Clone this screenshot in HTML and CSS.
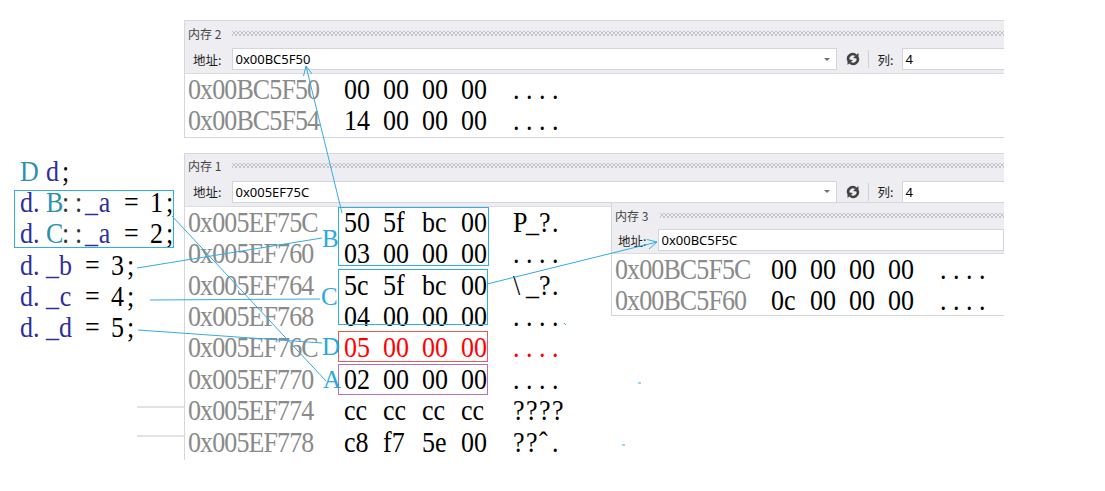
FILE: index.html
```html
<!DOCTYPE html>
<html lang="zh-CN">
<head>
<meta charset="utf-8">
<title>内存</title>
<link rel="stylesheet" href="styles.css">
</head>
<body>
<div class="canvas">
  <div class="code">
    <div class="line"><span class="ty">D</span><span>&nbsp;</span><span class="mb">d</span><span>;</span></div>
    <div class="line"><span class="mb">d</span><span class="mb dot">.</span><span class="ty">B</span><span class="op">:</span><span class="op">:</span><span class="mb">_</span><span class="mb">a</span><span>&nbsp;</span><span>=</span><span>&nbsp;</span><span>1</span><span>;</span></div>
    <div class="line"><span class="mb">d</span><span class="mb dot">.</span><span class="ty">C</span><span class="op">:</span><span class="op">:</span><span class="mb">_</span><span class="mb">a</span><span>&nbsp;</span><span>=</span><span>&nbsp;</span><span>2</span><span>;</span></div>
    <div class="line"><span class="mb">d</span><span class="mb dot">.</span><span class="mb">_</span><span class="mb">b</span><span>&nbsp;</span><span>=</span><span>&nbsp;</span><span>3</span><span>;</span></div>
    <div class="line"><span class="mb">d</span><span class="mb dot">.</span><span class="mb">_</span><span class="mb">c</span><span>&nbsp;</span><span>=</span><span>&nbsp;</span><span>4</span><span>;</span></div>
    <div class="line"><span class="mb">d</span><span class="mb dot">.</span><span class="mb">_</span><span class="mb">d</span><span>&nbsp;</span><span>=</span><span>&nbsp;</span><span>5</span><span>;</span></div>
  </div>

  <div class="stack">
    <section class="panel p2">
      <div class="head"><span>内存 2</span><div class="grip"></div></div>
      <div class="tools">
        <span class="lbl">地址:</span>
        <div class="field addr-field"><span>0x00BC5F50</span><i class="caret"></i></div>
        <svg class="refresh" viewBox="0 0 16 16" width="14" height="14"><path d="M2.8 9.6A5.3 5.3 0 0 1 11.4 3.9" fill="none" stroke="#424242" stroke-width="3"/><path d="M14.2 1.2L14.4 7.8L8 6.8Z" fill="#424242"/><path d="M13.2 6.4A5.3 5.3 0 0 1 4.6 12.1" fill="none" stroke="#424242" stroke-width="3"/><path d="M1.8 14.8L1.6 8.2L8 9.2Z" fill="#424242"/></svg>
        <i class="sep"></i>
        <span class="lbl col">列:</span>
        <div class="field cols"><span>4</span></div>
      </div>
      <div class="rows">
        <div class="row"><span class="addr">0x00BC5F50</span><span class="bytes"><span>00</span><span>00</span><span>00</span><span>00</span></span><span class="ascii"><span>.</span><span>.</span><span>.</span><span>.</span></span></div>
        <div class="row"><span class="addr">0x00BC5F54</span><span class="bytes"><span>14</span><span>00</span><span>00</span><span>00</span></span><span class="ascii"><span>.</span><span>.</span><span>.</span><span>.</span></span></div>
      </div>
    </section>

    <section class="panel p1">
      <div class="head"><span>内存 1</span><div class="grip"></div></div>
      <div class="tools">
        <span class="lbl">地址:</span>
        <div class="field addr-field"><span>0x005EF75C</span><i class="caret"></i></div>
        <svg class="refresh" viewBox="0 0 16 16" width="14" height="14"><path d="M2.8 9.6A5.3 5.3 0 0 1 11.4 3.9" fill="none" stroke="#424242" stroke-width="3"/><path d="M14.2 1.2L14.4 7.8L8 6.8Z" fill="#424242"/><path d="M13.2 6.4A5.3 5.3 0 0 1 4.6 12.1" fill="none" stroke="#424242" stroke-width="3"/><path d="M1.8 14.8L1.6 8.2L8 9.2Z" fill="#424242"/></svg>
        <i class="sep"></i>
        <span class="lbl col">列:</span>
        <div class="field cols"><span>4</span></div>
      </div>
      <div class="rows">
        <div class="row"><span class="addr">0x005EF75C</span><span class="bytes"><span>50</span><span>5f</span><span>bc</span><span>00</span></span><span class="ascii"><span>P</span><span>_</span><span>?</span><span>.</span></span></div>
        <div class="row"><span class="addr">0x005EF760</span><span class="bytes"><span>03</span><span>00</span><span>00</span><span>00</span></span><span class="ascii"><span>.</span><span>.</span><span>.</span><span>.</span></span></div>
        <div class="row"><span class="addr">0x005EF764</span><span class="bytes"><span>5c</span><span>5f</span><span>bc</span><span>00</span></span><span class="ascii"><span>\</span><span>_</span><span>?</span><span>.</span></span></div>
        <div class="row"><span class="addr">0x005EF768</span><span class="bytes"><span>04</span><span>00</span><span>00</span><span>00</span></span><span class="ascii"><span>.</span><span>.</span><span>.</span><span>.</span></span></div>
        <div class="row hot"><span class="addr">0x005EF76C</span><span class="bytes"><span>05</span><span>00</span><span>00</span><span>00</span></span><span class="ascii"><span>.</span><span>.</span><span>.</span><span>.</span></span></div>
        <div class="row"><span class="addr">0x005EF770</span><span class="bytes"><span>02</span><span>00</span><span>00</span><span>00</span></span><span class="ascii"><span>.</span><span>.</span><span>.</span><span>.</span></span></div>
        <div class="row"><span class="addr">0x005EF774</span><span class="bytes"><span>cc</span><span>cc</span><span>cc</span><span>cc</span></span><span class="ascii"><span>?</span><span>?</span><span>?</span><span>?</span></span></div>
        <div class="row"><span class="addr">0x005EF778</span><span class="bytes"><span>c8</span><span>f7</span><span>5e</span><span>00</span></span><span class="ascii"><span>?</span><span>?</span><span>ˆ</span><span>.</span></span></div>
      </div>
    </section>
  </div>

  <section class="panel p3">
    <div class="head"><span>内存 3</span><div class="grip"></div></div>
    <div class="tools">
      <span class="lbl">地址:</span>
      <div class="field wide"><span>0x00BC5F5C</span></div>
    </div>
    <div class="rows">
      <div class="row"><span class="addr">0x00BC5F5C</span><span class="bytes"><span>00</span><span>00</span><span>00</span><span>00</span></span><span class="ascii"><span>.</span><span>.</span><span>.</span><span>.</span></span></div>
      <div class="row"><span class="addr">0x00BC5F60</span><span class="bytes"><span>0c</span><span>00</span><span>00</span><span>00</span></span><span class="ascii"><span>.</span><span>.</span><span>.</span><span>.</span></span></div>
    </div>
  </section>

  <svg class="notes" width="1105" height="491" viewBox="0 0 1105 491">
    <g stroke="#e2e2ea" stroke-width="2">
      <line x1="137" y1="407" x2="184" y2="407"/>
      <line x1="137" y1="436" x2="184" y2="436"/>
    </g>
    <g fill="none" stroke="#33ace3" stroke-width="1">
      <rect x="14.5" y="190.5" width="159" height="57"/>
      <rect x="338.5" y="207.5" width="150" height="58"/>
      <rect x="338.5" y="269.5" width="149" height="55"/>
      <line x1="342" y1="213" x2="306" y2="66"/>
      <polyline points="303.5,76 306,66 312,74"/>
      <line x1="487" y1="284" x2="657" y2="242"/>
      <polyline points="647,239.5 657,242 649,249"/>
      <line x1="172" y1="216" x2="326" y2="381"/>
      <line x1="137" y1="268" x2="322" y2="238"/>
      <line x1="150" y1="300" x2="320" y2="299"/>
      <line x1="138" y1="330" x2="322" y2="343"/>
      <line x1="564" y1="323" x2="566" y2="325"/>
      <line x1="638" y1="383" x2="641" y2="383"/>
      <line x1="622" y1="445" x2="625" y2="445"/>
    </g>
    <rect x="338.5" y="331.5" width="149" height="30" fill="none" stroke="#e25c5c"/>
    <rect x="338.5" y="364.5" width="149" height="30" fill="none" stroke="#b46fc8"/>
    <g class="tag">
      <text x="322" y="247">B</text>
      <text x="321" y="305">C</text>
      <text x="322" y="355">D</text>
      <text x="323" y="388">A</text>
    </g>
  </svg>
</div>
</body>
</html>
```

FILE: styles.css
```css
* { box-sizing: border-box; margin: 0; padding: 0; }
html, body { background: #fff; }
body { width: 1105px; height: 491px; overflow: hidden; }

.canvas {
  position: relative;
  width: 1105px;
  height: 491px;
  display: flex;
}

/* source code column */
.code {
  width: 184px;
  flex: none;
  padding: 156px 0 0 20px;
  font: 26px/31.2px "Liberation Serif", serif;
  color: #000;
}
.line { display: flex; height: 31.2px; white-space: nowrap; }
.line span {
  flex: none;
  width: 13px;
  text-align: center;
  transform: scaleY(1.14);
}
.line .dot { text-align: left; }
.line .ty { color: #2b91af; }
.line .mb { color: #2e2e9e; }
.line .op { color: #333; }

/* windows */
.stack {
  width: 820px;
  flex: none;
  display: flex;
  flex-direction: column;
  gap: 15px;
  padding-top: 20px;
}
.panel {
  background: #fff;
  border: 1px solid #d6d6de;
  border-right: 0;
  overflow: hidden;
}
.p1 { height: 307px; border-bottom: 0; }
.p3 {
  position: absolute;
  left: 611px;
  top: 202px;
  width: 393px;
  height: 114px;
}

.head {
  height: 24px;
  background: #eeeef2;
  display: flex;
  align-items: center;
  padding-left: 3px;
  font: 12px "Noto Sans CJK SC", sans-serif;
  color: #444;
  white-space: nowrap;
}
.grip {
  flex: 1;
  height: 5px;
  margin-left: 11px;
  background-image:
    radial-gradient(circle, #c4c4cc 0.8px, transparent 1.1px),
    radial-gradient(circle, #c4c4cc 0.8px, transparent 1.1px);
  background-size: 4px 4px, 4px 4px;
  background-position: 0 0, 2px 2px;
}
.p3 .grip { margin-left: 12px; }

.tools {
  height: 29px;
  background: #eeeef2;
  border-bottom: 1px solid #dcdce2;
  display: flex;
  align-items: center;
  padding-left: 8px;
  white-space: nowrap;
}
.p3 .tools { height: 27px; padding-left: 6px; }
.lbl {
  font: 12.5px "Noto Sans CJK SC", sans-serif;
  color: #1e1e1e;
  flex: none;
}
.field {
  height: 22px;
  background: #fff;
  border: 1px solid #d4d4dc;
  display: flex;
  align-items: center;
  justify-content: space-between;
  padding: 0 6px 0 2px;
  font: 13px "Noto Sans", sans-serif;
  color: #000;
}
.addr-field { width: 605px; margin-left: 11px; flex: none; }
.wide { flex: 1; margin-left: 12px; }
.caret {
  width: 0;
  height: 0;
  border-left: 3px solid transparent;
  border-right: 3px solid transparent;
  border-top: 3px solid #717171;
}
.refresh { margin-left: 9px; flex: none; }
.sep {
  width: 1px;
  height: 18px;
  background: #d0d0d8;
  margin-left: 8px;
  flex: none;
}
.col { margin-left: 8px; }
.cols { flex: 1; margin-left: 9px; border-right: 0; }

/* memory rows */
.rows {
  padding-left: 3px;
  font: 26px/31.4px "Liberation Serif", serif;
  color: #000;
}
.row { display: flex; height: 31.4px; white-space: nowrap; }
.addr {
  width: 156px;
  flex: none;
  color: #8a8a8a;
  letter-spacing: -0.9px;
  transform: scaleY(1.12);
}
.bytes { display: flex; gap: 13px; width: 169px; flex: none; }
.bytes span { width: 26px; flex: none; transform: scaleY(1.12); }
.ascii { display: flex; }
.ascii span { width: 13px; flex: none; transform: scaleY(1.12); }
.row.hot .bytes, .row.hot .ascii { color: #ff0000; }

/* annotations drawn over the windows */
.notes {
  position: absolute;
  left: 0;
  top: 0;
  pointer-events: none;
}
.tag text {
  font: 25px "Liberation Serif", serif;
  fill: #2aa8e2;
}
```
